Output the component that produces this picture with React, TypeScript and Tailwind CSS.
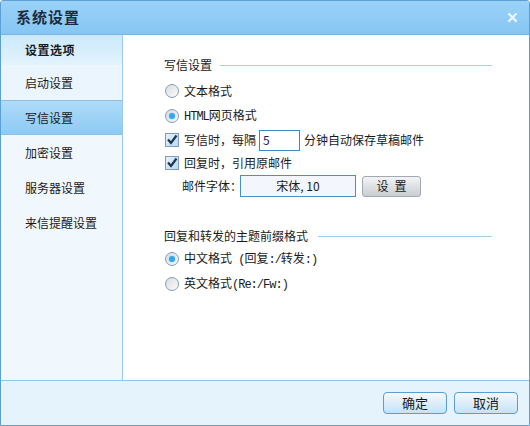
import React from 'react';

const font = { fontFamily: '"Noto Sans CJK SC", "Liberation Sans", sans-serif' };

function Radio({ checked }: { checked?: boolean }) {
  return (
    <span className="w-[14px] h-[14px] rounded-full border border-[#7f9db9] bg-gradient-to-br from-[#dcdcdc] to-[#fbfbfb] flex items-center justify-center shrink-0">
      {checked && <span className="w-[6px] h-[6px] rounded-full bg-[#33a6ee] shadow-[0_0_2px_#7fd0ff]" />}
    </span>
  );
}

function Check() {
  return (
    <span className="w-[14px] h-[14px] border border-[#7f9db9] bg-gradient-to-br from-[#e4f1fb] to-[#b9daf2] flex items-center justify-center shrink-0">
      <svg width="12" height="12" viewBox="0 0 12 12">
        <path d="M2 5.5 L5 9 L10.5 1.5" fill="none" stroke="#1f3550" strokeWidth="2.2" />
      </svg>
    </span>
  );
}

// half-width ascii, like the old bitmap font
function Mono({ children }: { children: React.ReactNode }) {
  return <span className="font-['Liberation_Mono',monospace] text-[12px] tracking-[-1px]">{children}</span>;
}

const menu = ['启动设置', '写信设置', '加密设置', '服务器设置', '来信提醒设置'];

export default function App() {
  return (
    <div className="w-[530px] h-[426px] bg-white text-[12px] text-[#1a1a1a]" style={font}>
      <div className="w-full h-full flex flex-col border border-[#5b9fd4] rounded-t-[3px] overflow-hidden">
        {/* title bar */}
        <div className="h-[34px] shrink-0 flex items-center justify-between pl-[15px] pr-[11px] bg-gradient-to-b from-[#9ad2f7] to-[#86c6f3] border-b border-[#77b5e3]">
          <span className="text-[15px] font-bold text-[#1c2c3c] tracking-[1px]">系统设置</span>
          <svg width="11" height="11" viewBox="0 0 12 12">
            <path d="M1.5 1.5 L10.5 10.5 M10.5 1.5 L1.5 10.5" stroke="#e8f5ff" strokeWidth="2.4" />
          </svg>
        </div>

        <div className="flex flex-1 min-h-0">
          {/* sidebar */}
          <div className="w-[122px] shrink-0 bg-[#f1f8fd] border-r border-[#9ccbed] flex flex-col">
            <div className="h-[30px] flex items-center pl-[24px] font-bold bg-gradient-to-b from-[#cbe9fb] to-[#e2f3fd] tracking-[0.5px]">设置选项</div>
            {menu.map((m, i) => (
              <div
                key={m}
                className={
                  i === 1
                    ? 'h-[35px] flex items-center pl-[24px] bg-gradient-to-b from-[#aedbf8] to-[#8ccbf4] border-y border-[#8dbfe6]'
                    : i === 0
                    ? 'h-[35px] flex items-center pl-[24px] bg-[#eaf5fd]'
                    : 'h-[35px] flex items-center pl-[24px]'
                }
              >
                {m}
              </div>
            ))}
          </div>

          {/* content */}
          <div className="flex-1 pl-[41px] pr-[37px] pt-[20px] flex flex-col">
            <div className="flex items-center gap-[8px] h-[20px]">
              <span>写信设置</span>
              <div className="flex-1 h-px bg-[#a6cde9]" />
            </div>
            <div className="flex items-center gap-[5px] h-[25px] mt-[3px] pl-[1px]">
              <Radio />
              <span>文本格式</span>
            </div>
            <div className="flex items-center gap-[5px] h-[25px] pl-[1px]">
              <Radio checked />
              <span><Mono>HTML</Mono>网页格式</span>
            </div>
            <div className="flex items-center gap-[5px] h-[24px] pl-[1px]">
              <Check />
              <span>写信时，每隔</span>
              <div className="w-[41px] h-[21px] border border-[#3c89c8] flex items-center pl-[3px] text-[#2a1a6a] -ml-[2px]">5</div>
              <span className="ml-[-1px]">分钟自动保存草稿邮件</span>
            </div>
            <div className="flex items-center gap-[5px] h-[22px] pl-[1px]">
              <Check />
              <span>回复时，引用原邮件</span>
            </div>
            <div className="flex items-center h-[24px] pl-[18px]">
              <span className="mr-[-2px]">邮件字体：</span>
              <div className="w-[116px] h-[22px] border border-[#4a90c8] bg-[#f3f7fd] flex items-center justify-center">宋体, 10</div>
              <button className="ml-[6px] w-[59px] h-[21px] border border-[#a2a9b1] rounded-[3px] bg-gradient-to-b from-[#f3f4f5] to-[#c9ced3] tracking-[6px] pl-[6px]">设置</button>
            </div>
            <div className="flex items-center gap-[10px] h-[20px] mt-[28px]">
              <span>回复和转发的主题前缀格式</span>
              <div className="flex-1 h-px bg-[#a6cde9]" />
            </div>
            <div className="flex items-center gap-[5px] h-[24px] mt-[1px] pl-[1px]">
              <Radio checked />
              <span>中文格式<Mono> (</Mono>回复<Mono>:/</Mono>转发<Mono>:)</Mono></span>
            </div>
            <div className="flex items-center gap-[5px] h-[26px] pl-[1px]">
              <Radio />
              <span>英文格式<Mono>(Re:/Fw:)</Mono></span>
            </div>
          </div>
        </div>

        {/* footer */}
        <div className="h-[45px] shrink-0 bg-[#e4f3fc] border-t border-[#93c4e6] flex items-center justify-end gap-[7px] pr-[11px]">
          <button className="w-[64px] h-[22px] rounded-[4px] border border-[#5d9dd0] bg-gradient-to-b from-[#f3f9fe] to-[#c6e2f6] text-[13px]">确定</button>
          <button className="w-[64px] h-[22px] rounded-[4px] border border-[#5d9dd0] bg-gradient-to-b from-[#f3f9fe] to-[#c6e2f6] text-[13px]">取消</button>
        </div>
      </div>
    </div>
  );
}
